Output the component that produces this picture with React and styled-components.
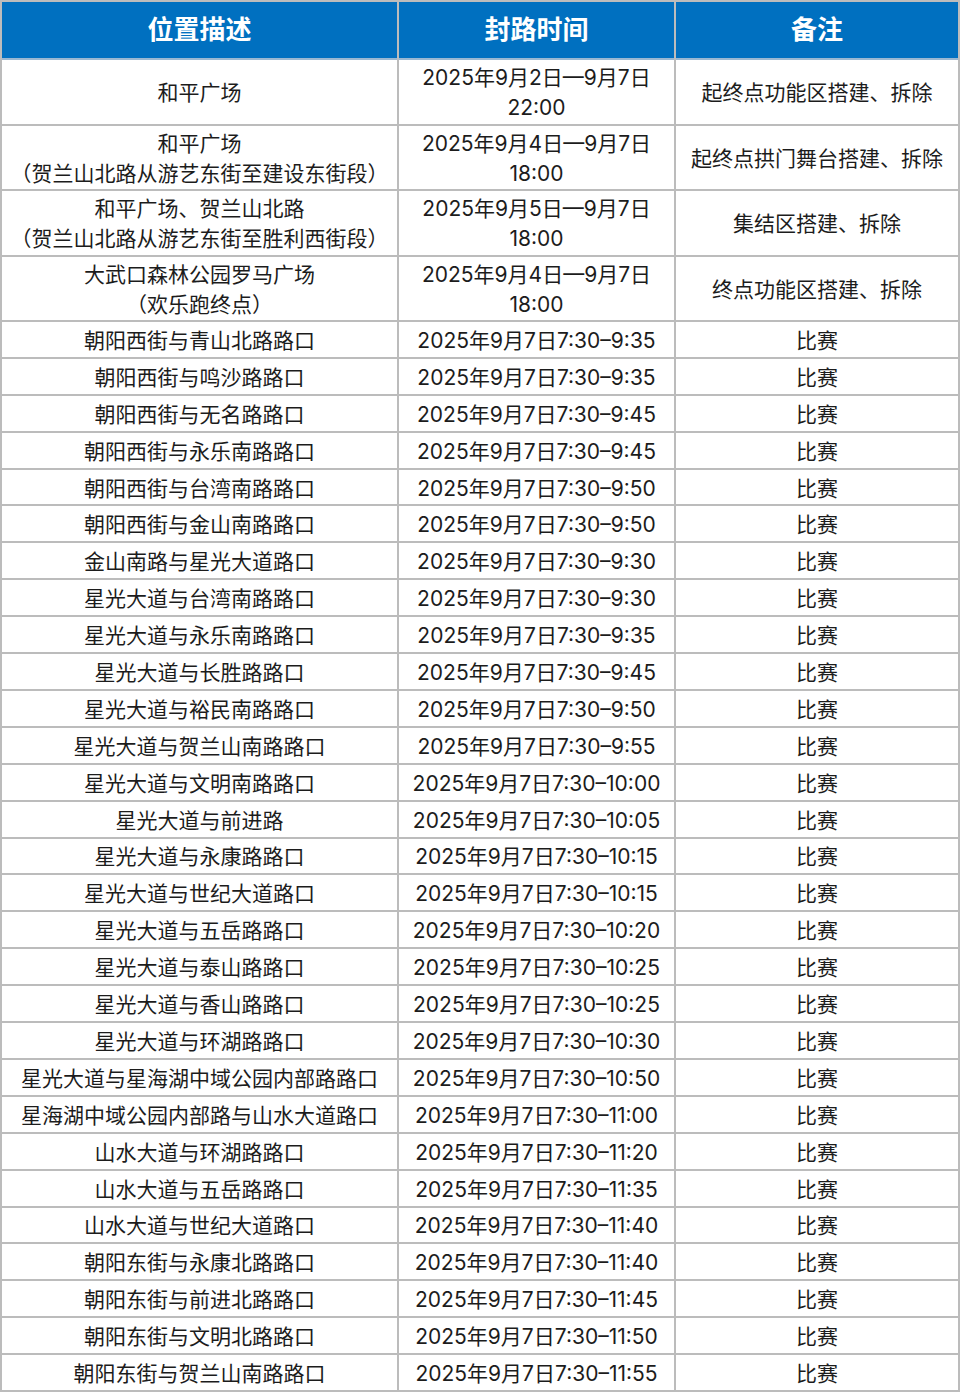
import React from 'react';
import styled, { createGlobalStyle } from 'styled-components';

const GlobalStyle = createGlobalStyle`
  html, body {
    margin: 0;
    padding: 0;
    background: #ffffff;
  }
  body {
    font-family: Inter, "Noto Sans CJK SC", "Noto Sans", sans-serif;
    color: #1c1c1c;
  }
`;

const Table = styled.div`
  display: grid;
  grid-template-columns: 395px 275px 282px;
  grid-template-rows: 56px repeat(4, 63.5px) repeat(29, 1fr);
  gap: 2px;
  padding: 2px;
  width: 960px;
  height: 1392px;
  box-sizing: border-box;
  background: #bcbcbc;
`;

const HeadCell = styled.div`
  display: flex;
  align-items: center;
  justify-content: center;
  padding-bottom: 5px;
  box-sizing: border-box;
  background: #0070c0;
  color: #ffffff;
  font-size: 26px;
  font-weight: 700;
  box-shadow: 0 2px 0 #9ab8d2;
`;

const Cell = styled.div`
  display: flex;
  flex-direction: column;
  align-items: center;
  justify-content: center;
  padding-top: 3px;
  box-sizing: border-box;
  background: #ffffff;
  font-size: 21px;
  line-height: ${(p) => (p.$tall ? '30px' : '26px')};
  text-align: center;
  white-space: nowrap;
`;

const tallRows = [
  [['和平广场'], ['2025年9月2日—9月7日', '22:00'], '起终点功能区搭建、拆除'],
  [['和平广场', '（贺兰山北路从游艺东街至建设东街段）'], ['2025年9月4日—9月7日', '18:00'], '起终点拱门舞台搭建、拆除'],
  [['和平广场、贺兰山北路', '（贺兰山北路从游艺东街至胜利西街段）'], ['2025年9月5日—9月7日', '18:00'], '集结区搭建、拆除'],
  [['大武口森林公园罗马广场', '（欢乐跑终点）'], ['2025年9月4日—9月7日', '18:00'], '终点功能区搭建、拆除'],
];

const raceRows = [
  ['朝阳西街与青山北路路口', '9:35'],
  ['朝阳西街与鸣沙路路口', '9:35'],
  ['朝阳西街与无名路路口', '9:45'],
  ['朝阳西街与永乐南路路口', '9:45'],
  ['朝阳西街与台湾南路路口', '9:50'],
  ['朝阳西街与金山南路路口', '9:50'],
  ['金山南路与星光大道路口', '9:30'],
  ['星光大道与台湾南路路口', '9:30'],
  ['星光大道与永乐南路路口', '9:35'],
  ['星光大道与长胜路路口', '9:45'],
  ['星光大道与裕民南路路口', '9:50'],
  ['星光大道与贺兰山南路路口', '9:55'],
  ['星光大道与文明南路路口', '10:00'],
  ['星光大道与前进路', '10:05'],
  ['星光大道与永康路路口', '10:15'],
  ['星光大道与世纪大道路口', '10:15'],
  ['星光大道与五岳路路口', '10:20'],
  ['星光大道与泰山路路口', '10:25'],
  ['星光大道与香山路路口', '10:25'],
  ['星光大道与环湖路路口', '10:30'],
  ['星光大道与星海湖中域公园内部路路口', '10:50'],
  ['星海湖中域公园内部路与山水大道路口', '11:00'],
  ['山水大道与环湖路路口', '11:20'],
  ['山水大道与五岳路路口', '11:35'],
  ['山水大道与世纪大道路口', '11:40'],
  ['朝阳东街与永康北路路口', '11:40'],
  ['朝阳东街与前进北路路口', '11:45'],
  ['朝阳东街与文明北路路口', '11:50'],
  ['朝阳东街与贺兰山南路路口', '11:55'],
];

export default function App() {
  return (
    <>
      <GlobalStyle />
      <Table>
        <HeadCell>位置描述</HeadCell>
        <HeadCell>封路时间</HeadCell>
        <HeadCell>备注</HeadCell>

        {tallRows.map(([place, time, note], i) => (
          <React.Fragment key={'t' + i}>
            <Cell $tall>
              {place.map((line) => (
                <span key={line}>{line}</span>
              ))}
            </Cell>
            <Cell $tall>
              {time.map((line) => (
                <span key={line}>{line}</span>
              ))}
            </Cell>
            <Cell $tall>{note}</Cell>
          </React.Fragment>
        ))}

        {raceRows.map(([place, end], i) => (
          <React.Fragment key={'r' + i}>
            <Cell>{place}</Cell>
            <Cell>{`2025年9月7日7:30–${end}`}</Cell>
            <Cell>比赛</Cell>
          </React.Fragment>
        ))}
      </Table>
    </>
  );
}
